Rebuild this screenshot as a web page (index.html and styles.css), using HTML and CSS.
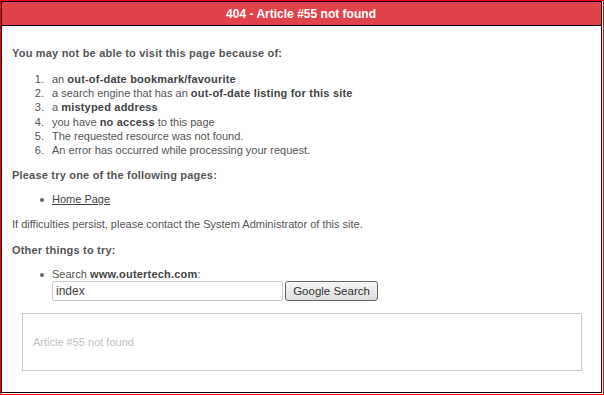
FILE: index.html
```html
<!DOCTYPE html>
<html lang="en">
<head>
    <meta charset="UTF-8" />
    <title>404 - Article #55 not found</title>
    <link rel="stylesheet" href="styles.css">
</head>
<body>
    <div class="frame">
        <div class="window">
            <header class="title"><span>404 - Article #55 not found</span></header>

            <div class="content">
                <h3>You may not be able to visit this page because of:</h3>
                <ol class="reasons">
                    <li>an <b>out-of-date bookmark/favourite</b></li>
                    <li>a search engine that has an <b>out-of-date listing for this site</b></li>
                    <li>a <b>mistyped address</b></li>
                    <li>you have <b>no access</b> to this page</li>
                    <li>The requested resource was not found.</li>
                    <li>An error has occurred while processing your request.</li>
                </ol>

                <h3>Please try one of the following pages:</h3>
                <ul class="pages">
                    <li><a href="#">Home Page</a></li>
                </ul>

                <p>If difficulties persist, please contact the System Administrator of this site.</p>

                <h3>Other things to try:</h3>
                <ul class="pages">
                    <li>Search <b>www.outertech.com</b>:
                        <form class="search">
                            <input type="text" value="index" />
                            <button type="button">Google Search</button>
                        </form>
                    </li>
                </ul>

                <div class="message">Article #55 not found</div>
            </div>
        </div>
    </div>
</body>
</html>
```

FILE: styles.css
```css
body {
    margin: 0;
    font-family: 'Liberation Sans', Arial, sans-serif;
    font-size: 11px;
    color: #555;
    background-color: #fff;
}

.frame {
    width: 604px;
    height: 395px;
    box-sizing: border-box;
    border: 1px solid #f00;
}

.window {
    width: 601px;
    height: 392px;
    box-sizing: border-box;
    border: 1px solid #000;
}

.title {
    height: 23px;
    line-height: 23px;
    background-color: #e2434b;
    border-bottom: 1px solid #000;
    color: #fff;
    font-size: 13px;
    font-weight: 700;
    text-align: center;
}

    /* no narrow font installed, squeeze the bold one */
    .title span {
        display: inline-block;
        transform: scaleX(0.925);
    }

.content {
    padding: 20px 10px 0 10px;
}

    .content h3 {
        margin: 0;
        font-size: 11px;
        font-weight: 700;
        line-height: 14px;
        letter-spacing: 0.2px;
    }

    .content p {
        margin: 11px 0 12px 0;
        line-height: 14px;
    }

    .content b {
        color: #444;
        letter-spacing: 0.2px;
    }

.reasons {
    margin: 12px 0 11px 0;
    padding-left: 35px;
    line-height: 14.2px;
}

    .reasons li {
        padding-left: 5px;
    }

.pages {
    margin: 10px 0 11px 0;
    padding-left: 40px;
    line-height: 14px;
    list-style: none;
}

    .pages li::before {
        content: "";
        display: inline-block;
        width: 4px;
        height: 4px;
        border-radius: 50%;
        background-color: #666;
        margin-left: -12px;
        margin-right: 8px;
        vertical-align: middle;
    }

    .pages a {
        color: #444;
    }

.search {
    display: flex;
    gap: 2px;
    margin: 0;
}

    .search input {
        width: 231px;
        height: 20px;
        box-sizing: border-box;
        border: 1px solid #ccc;
        border-radius: 2px;
        padding: 0 3px;
        font-family: 'Liberation Sans', Arial, sans-serif;
        font-size: 12px;
        color: #444;
    }

    .search button {
        width: 93px;
        height: 20px;
        border: 1px solid #666;
        border-radius: 3px;
        background: linear-gradient(#f7f7f7, #dedede);
        font-family: 'Liberation Sans', Arial, sans-serif;
        font-size: 11.5px;
        color: #333;
        padding: 0;
    }

.message {
    margin: 12px 9px 0 10px;
    height: 56px;
    line-height: 56px;
    border: 1px solid #ccc;
    padding-left: 10px;
    color: #c0c0c0;
}
```
